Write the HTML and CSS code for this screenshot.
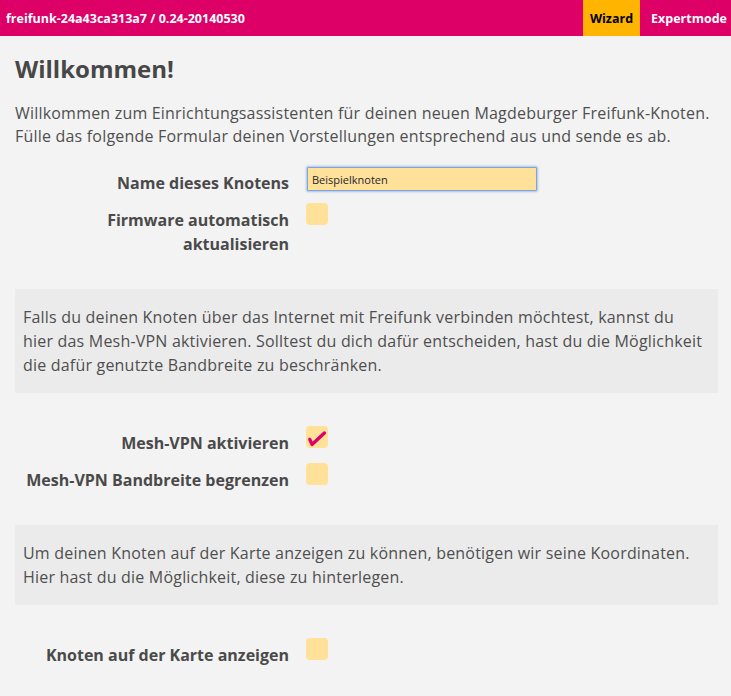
FILE: index.html
```html
<!DOCTYPE html>
<html lang="de">
<head>
<meta charset="utf-8">
<title>Freifunk Wizard</title>
<link rel="stylesheet" href="styles.css">
</head>
<body>
<header class="topbar">
  <span class="host">freifunk-24a43ca313a7 / 0.24-20140530</span>
  <nav class="tabs">
    <a class="tab tab-active" href="#">Wizard</a>
    <a class="tab" href="#">Expertmode</a>
  </nav>
</header>
<main class="content">
  <h2 class="title">Willkommen!</h2>
  <p class="intro">Willkommen zum Einrichtungsassistenten für deinen neuen Magdeburger Freifunk-Knoten. Fülle das folgende Formular deinen Vorstellungen entsprechend aus und sende es ab.</p>

  <div class="form form-first">
    <div class="row">
      <label class="lbl">Name dieses Knotens</label>
      <div class="field"><input class="text" type="text" value="Beispielknoten"></div>
    </div>
    <div class="row">
      <label class="lbl">Firmware automatisch aktualisieren</label>
      <div class="field"><span class="check"></span></div>
    </div>
  </div>

  <div class="note">Falls du deinen Knoten über das Internet mit Freifunk verbinden möchtest, kannst du hier das Mesh-VPN aktivieren. Solltest du dich dafür entscheiden, hast du die Möglichkeit die dafür genutzte Bandbreite zu beschränken.</div>

  <div class="form">
    <div class="row">
      <label class="lbl">Mesh-VPN aktivieren</label>
      <div class="field"><span class="check"><svg class="tick" viewBox="0 0 22 22" width="22" height="22"><path d="M3.8 13.4 L6 18.4 L18.4 7" fill="none" stroke="#dc0067" stroke-width="3.4" stroke-linecap="round" stroke-linejoin="round"/></svg></span></div>
    </div>
    <div class="row">
      <label class="lbl">Mesh-VPN Bandbreite begrenzen</label>
      <div class="field"><span class="check"></span></div>
    </div>
  </div>

  <div class="note">Um deinen Knoten auf der Karte anzeigen zu können, benötigen wir seine Koordinaten. Hier hast du die Möglichkeit, diese zu hinterlegen.</div>

  <div class="form">
    <div class="row">
      <label class="lbl">Knoten auf der Karte anzeigen</label>
      <div class="field"><span class="check"></span></div>
    </div>
  </div>
</main>
</body>
</html>
```
FILE: styles.css
```css
html, body {
  margin: 0;
  padding: 0;
}

body {
  background: #f3f3f3;
  font-family: "Open Sans", "Liberation Sans", sans-serif;
  font-size: 16px;
  color: #4f4f4f;
}

.topbar {
  display: flex;
  height: 36px;
  background: #dc0067;
  color: #fff;
  font-size: 12.5px;
  font-weight: 700;
  overflow: hidden;
}

.host {
  align-self: center;
  padding-left: 6px;
}

.tabs {
  display: flex;
  gap: 4px;
  margin-left: auto;
  margin-right: -3px;
}

.tab {
  display: flex;
  align-items: center;
  padding: 0 7px;
  color: #fff;
  text-decoration: none;
}

.tab-active {
  background: #ffb400;
  color: #000;
}

.content {
  padding: 0 13px 30px 15px;
}

.title {
  margin: 18px 0 0;
  font-size: 24px;
  line-height: 29px;
  font-weight: 700;
  color: #474747;
}

.intro {
  margin: 19px 0 0;
  line-height: 23px;
  letter-spacing: 0.2px;
}

.form {
  margin-top: 33px;
}

.form-first {
  margin-top: 18px;
}

.row {
  display: flex;
  align-items: flex-start;
  margin-bottom: 8px;
}

.row:last-child {
  margin-bottom: 0;
}

.lbl {
  flex: none;
  width: 274px;
  padding-top: 5px;
  text-align: right;
  font-weight: 700;
  line-height: 24px;
  color: #4a4a4a;
}

.field {
  margin-left: 17px;
}

.text {
  display: block;
  box-sizing: border-box;
  width: 230px;
  height: 24px;
  margin: 1px 0 0 1px;
  padding: 0 4px;
  border: 1px solid #7ea6da;
  border-radius: 1px;
  box-shadow: 0 0 2px 1px rgba(110, 155, 220, 0.55);
  background: #ffe199;
  font-family: "Open Sans", "Liberation Sans", sans-serif;
  font-size: 11px;
  color: #1e2633;
  outline: none;
}

.check {
  display: block;
  width: 22px;
  height: 22px;
  border-radius: 4px;
  background: #ffe199;
}

.tick {
  display: block;
}

.note {
  margin-top: 33px;
  padding: 16px 12px 16px 8px;
  background: #ebebeb;
  line-height: 24px;
  letter-spacing: 0.2px;
}
```
